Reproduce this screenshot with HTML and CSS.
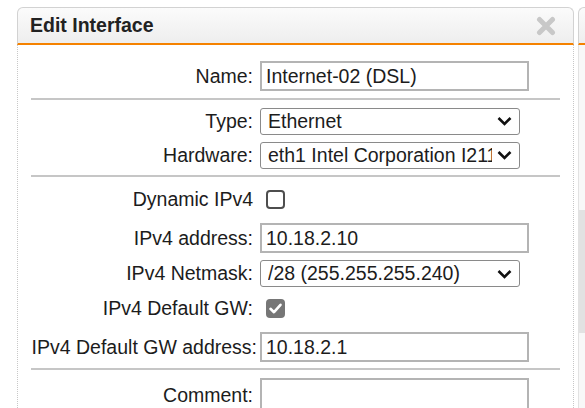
FILE: index.html
```html
<!DOCTYPE html>
<html>
<head>
<meta charset="utf-8">
<link rel="stylesheet" href="styles.css">
</head>
<body>
<div class="page">
  <div class="dialog">
    <div class="dlg-head">
      <span class="dlg-title">Edit Interface</span>
      <svg class="close" width="20" height="20" viewBox="0 0 20 20"><path d="M3.5 3.5 L16.5 16.5 M16.5 3.5 L3.5 16.5" stroke="#c8c8c8" stroke-width="5" stroke-linecap="round" fill="none"/></svg>
    </div>
    <div class="dlg-body">
      <div class="row row--name">
        <span class="lbl">Name:</span>
        <div class="input">Internet-02 (DSL)</div>
      </div>
      <div class="sep"></div>

      <div class="row row--type">
        <span class="lbl">Type:</span>
        <div class="select"><span class="select-text">Ethernet</span><svg class="chev" width="15" height="10" viewBox="0 0 15 10"><path d="M1.5 2 L7.5 8 L13.5 2" stroke="#111" stroke-width="2.6" fill="none"/></svg></div>
      </div>
      <div class="row row--hw">
        <span class="lbl">Hardware:</span>
        <div class="select"><span class="select-text">eth1 Intel Corporation I211 Gigabit Network Connection</span><svg class="chev" width="15" height="10" viewBox="0 0 15 10"><path d="M1.5 2 L7.5 8 L13.5 2" stroke="#111" stroke-width="2.6" fill="none"/></svg></div>
      </div>
      <div class="sep"></div>

      <div class="row row--dyn">
        <span class="lbl">Dynamic IPv4</span>
        <span class="check"></span>
      </div>
      <div class="row row--addr">
        <span class="lbl">IPv4 address:</span>
        <div class="input">10.18.2.10</div>
      </div>
      <div class="row row--mask">
        <span class="lbl">IPv4 Netmask:</span>
        <div class="select"><span class="select-text">/28 (255.255.255.240)</span><svg class="chev" width="15" height="10" viewBox="0 0 15 10"><path d="M1.5 2 L7.5 8 L13.5 2" stroke="#111" stroke-width="2.6" fill="none"/></svg></div>
      </div>
      <div class="row row--gw">
        <span class="lbl">IPv4 Default GW:</span>
        <span class="check check--on"><svg width="19" height="19" viewBox="0 0 19 19"><path d="M4.5 9.8 L8 13.2 L14.5 5.8" stroke="#fff" stroke-width="2.6" fill="none" stroke-linecap="round" stroke-linejoin="round"/></svg></span>
      </div>
      <div class="row row--gwaddr">
        <span class="lbl lbl--long">IPv4 Default GW address:</span>
        <div class="input">10.18.2.1</div>
      </div>
      <div class="sep sep--last"></div>

      <div class="row row--comment">
        <span class="lbl">Comment:</span>
        <div class="input input--comment"></div>
      </div>
    </div>
  </div>
  <div class="side">
    <div class="side-head"></div>
    <div class="side-body"><div class="thumb"></div></div>
  </div>
</div>
</body>
</html>
```

FILE: styles.css
```css
html, body {
  margin: 0;
  padding: 0;
}
body {
  background: #ffffff;
  font-family: "Liberation Sans", Arial, sans-serif;
  font-size: 19.5px;
  color: #1c1c1c;
  width: 585px;
  height: 408px;
  overflow: hidden;
}
.page {
  display: flex;
  padding: 7px 0 0 17px;
}
.dialog {
  width: 557px;
  flex: none;
}
.dlg-head {
  box-sizing: border-box;
  height: 38px;
  border: 1px solid #d2d2d2;
  border-bottom: 2px solid #f58200;
  border-radius: 6px 6px 0 0;
  background: linear-gradient(#fbfbfb, #eeeeee);
  display: flex;
  align-items: center;
  justify-content: space-between;
  padding: 0 17px 0 12px;
}
.dlg-title {
  font-weight: bold;
  color: #222;
}
.close {
  display: block;
}
.dlg-body {
  box-sizing: border-box;
  border-left: 1px dotted #c8c8c8;
  border-right: 1px dotted #c8c8c8;
  padding-top: 12px;
  height: 363px;
  overflow: hidden;
  background: #fff;
}
.row {
  display: grid;
  grid-template-columns: 239px 1fr;
  column-gap: 3px;
  align-items: center;
}
.row--name { height: 38px; }
.row--type { height: 34px; margin-top: 4px; }
.row--hw { height: 34px; }
.row--dyn { height: 39px; margin-top: 3px; }
.row--addr { height: 38px; }
.row--mask { height: 33px; }
.row--gw { height: 37px; }
.row--gwaddr { height: 40px; }
.row--comment { height: 34px; margin-top: 8px; }

.lbl {
  text-align: right;
  padding-right: 4px;
  white-space: nowrap;
}
.lbl--long {
  padding-right: 0;
}
.sep {
  height: 2px;
  background: #c6c6c6;
  margin: 3px 13px 0;
}
.sep--last {
  margin-top: 1px;
}
.input {
  box-sizing: border-box;
  width: 269px;
  height: 30px;
  border: 2px solid #b4b4b4;
  padding: 0 4px;
  display: flex;
  align-items: center;
  white-space: nowrap;
  background: #fff;
}
.input--comment {
  height: 34px;
}
.select {
  box-sizing: border-box;
  width: 260px;
  height: 27px;
  border: 1px solid #8a8a8a;
  border-radius: 3px;
  display: flex;
  align-items: center;
  padding: 0 7px;
  background: #fff;
}
.select-text {
  flex: 1;
  min-width: 0;
  overflow: hidden;
  white-space: nowrap;
  margin-right: 5px;
}
.chev {
  flex: none;
  display: block;
}
.check {
  box-sizing: border-box;
  width: 19px;
  height: 19px;
  margin-left: 6px;
  border: 2px solid #4e4e4e;
  border-radius: 4px;
  background: #fff;
  display: block;
}
.check--on {
  border: none;
  background: #767676;
}
.check--on svg {
  display: block;
}
.side {
  flex: 1;
  margin-left: 4px;
}
.side-head {
  box-sizing: border-box;
  height: 38px;
  border: 1px solid #d2d2d2;
  border-right: none;
  border-bottom: 2px solid #f58200;
  border-radius: 6px 0 0 0;
  background: linear-gradient(#fbfbfb, #eeeeee);
}
.side-body {
  box-sizing: border-box;
  height: 363px;
  border-left: 1px solid #e2e2e2;
  background: #f8f8f8;
  padding-top: 165px;
}
.thumb {
  height: 123px;
  background: #e2e2e2;
}
```
